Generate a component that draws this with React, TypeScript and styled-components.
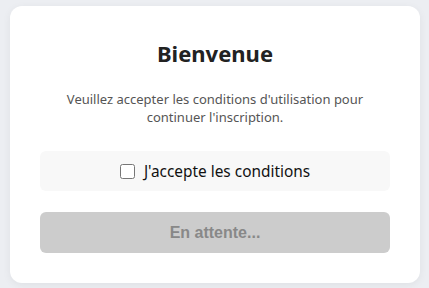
import React, { useState } from 'react';
import styled, { createGlobalStyle } from 'styled-components';

const GlobalStyle = createGlobalStyle`
  html, body {
    margin: 0;
    padding: 0;
    background: #eceef2;
  }
  body {
    font-family: "Noto Sans", "Open Sans", sans-serif;
  }
`;

const Page = styled.div`
  padding: 6px 9px 5px 10px;
`;

const Card = styled.div`
  background: #ffffff;
  border-radius: 12px;
  box-shadow: 0 2px 8px rgba(0, 0, 0, 0.06);
  padding: 32px 30px 30px;
  box-sizing: border-box;
  height: 277px;
  text-align: center;
`;

const Title = styled.h1`
  margin: 0;
  font-size: 22px;
  line-height: 30px;
  font-weight: 700;
  color: #222;
`;

const Intro = styled.p`
  margin: 22px 0 0;
  font-size: 13px;
  line-height: 18px;
  color: #555;
`;

const ConsentBox = styled.label`
  margin-top: 25px;
  height: 40px;
  background: #f8f8f8;
  border-radius: 6px;
  display: flex;
  align-items: center;
  justify-content: center;
  gap: 9px;
  font-size: 15.4px;
  color: #111;
  cursor: pointer;
`;

const Check = styled.input`
  width: 15px;
  height: 15px;
  margin: 0;
`;

const SubmitButton = styled.button<{ $ready: boolean }>`
  margin-top: 21px;
  width: 100%;
  height: 41px;
  border: none;
  border-radius: 6px;
  background: ${(p) => (p.$ready ? '#4a7cf0' : '#cccccc')};
  color: ${(p) => (p.$ready ? '#fff' : '#888888')};
  font-family: "Liberation Sans", Arial, sans-serif;
  font-size: 16px;
  font-weight: 700;
  cursor: ${(p) => (p.$ready ? 'pointer' : 'not-allowed')};
`;

const App: React.FC = () => {
  const [accepted, setAccepted] = useState(false);
  return (
    <Page>
      <GlobalStyle />
      <Card>
        <Title>Bienvenue</Title>
        <Intro>
          Veuillez accepter les conditions d'utilisation pour
          <br />
          continuer l'inscription.
        </Intro>
        <ConsentBox>
          <Check
            type="checkbox"
            checked={accepted}
            onChange={(e) => setAccepted(e.target.checked)}
          />
          J'accepte les conditions
        </ConsentBox>
        <SubmitButton $ready={accepted} disabled={!accepted}>
          {accepted ? 'Continuer' : 'En attente...'}
        </SubmitButton>
      </Card>
    </Page>
  );
};

export default App;
